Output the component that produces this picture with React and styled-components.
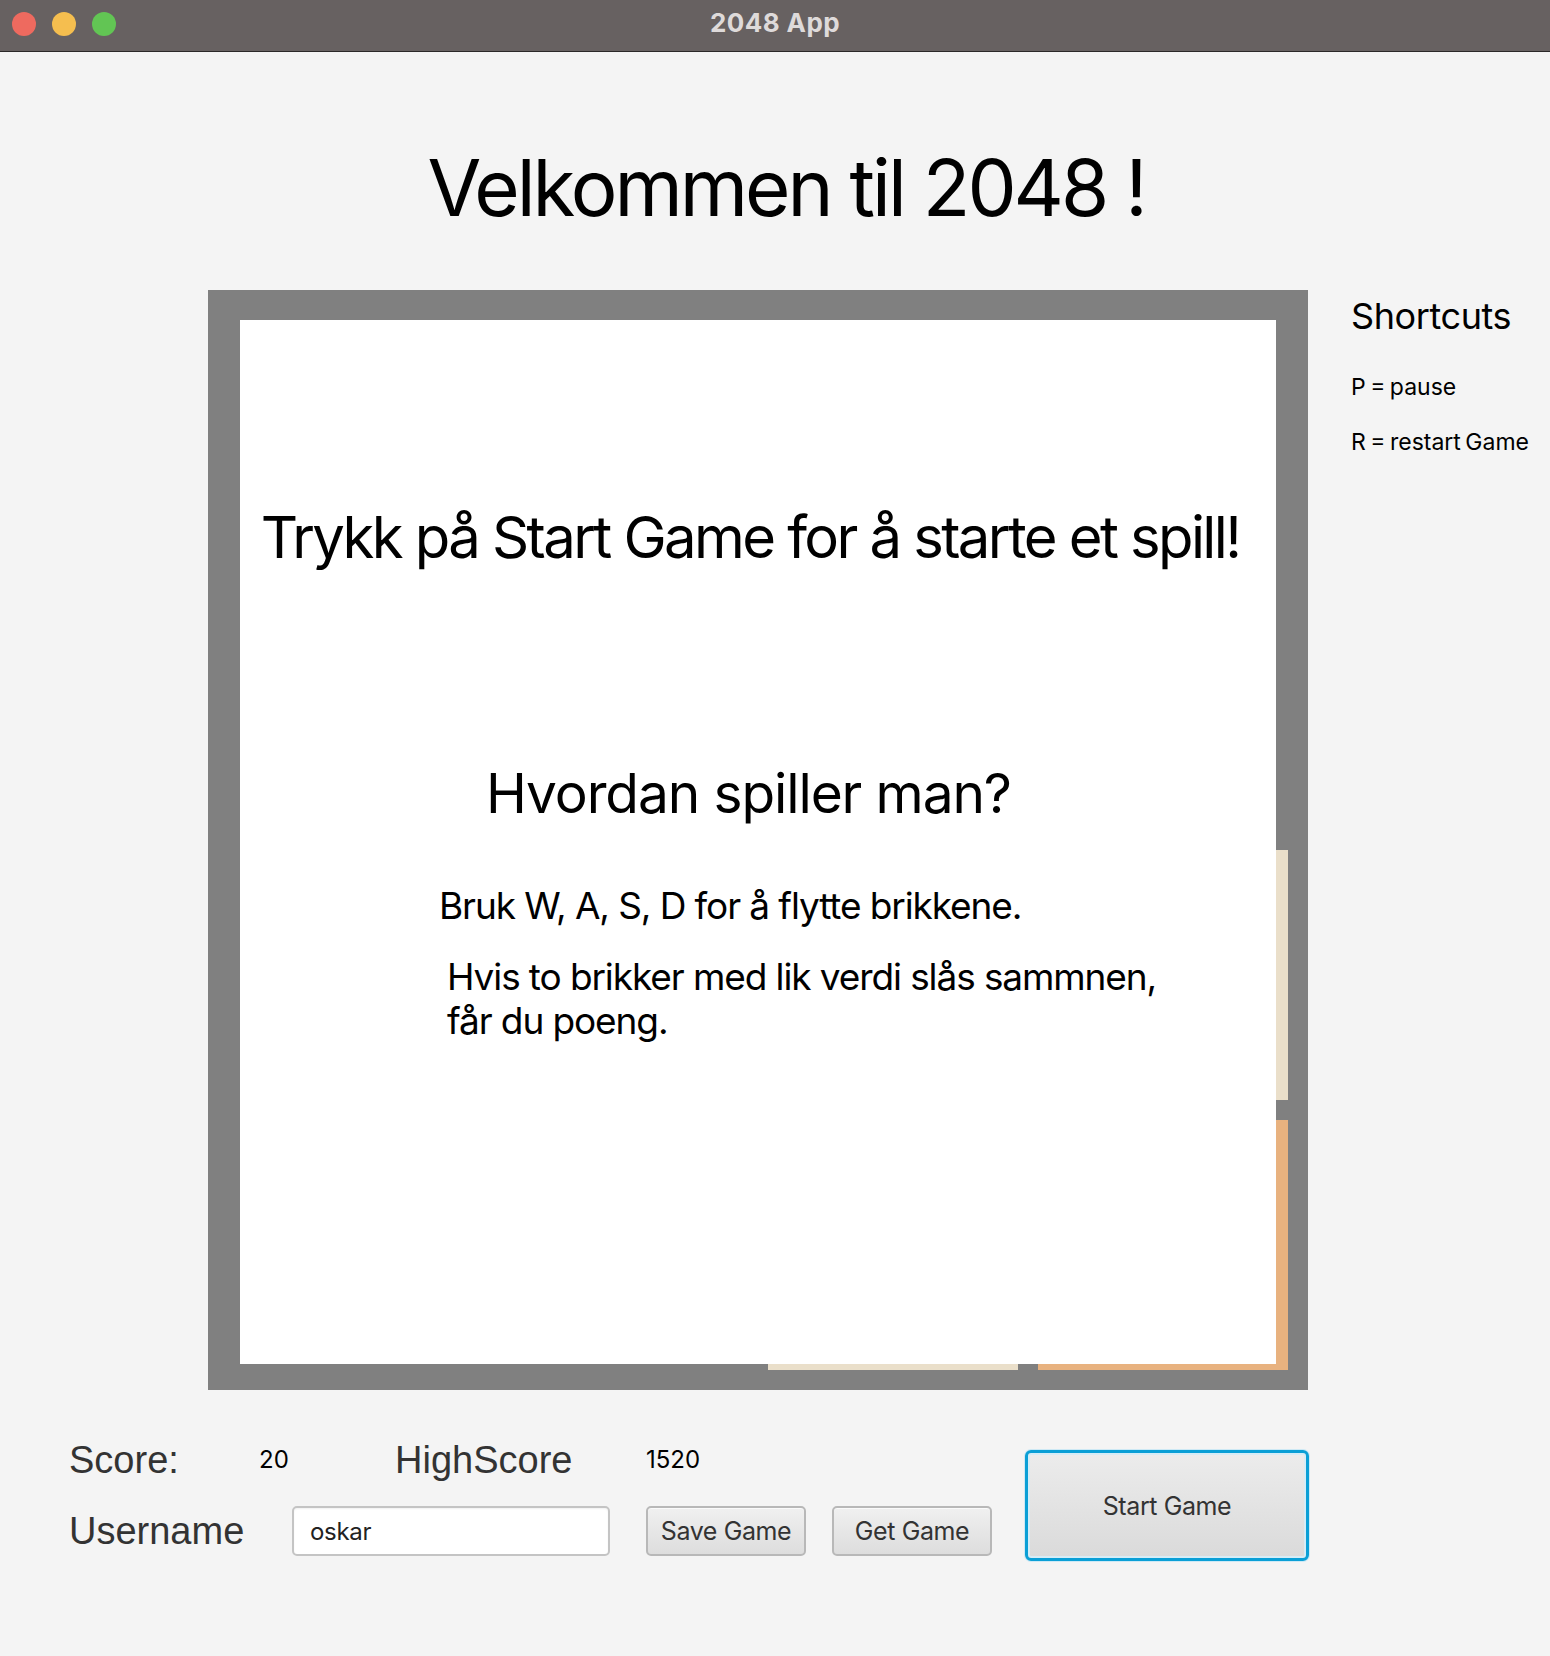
import styled, { createGlobalStyle } from "styled-components";

const GlobalStyle = createGlobalStyle`
    body {
        margin: 0;
        background-color: #f4f4f4;
        font-family: Inter, "Noto Sans", sans-serif;
    }
`

const tiles = [
    [0, 0, 0, 0],
    [0, 0, 0, 0],
    [0, 0, 0, 4],
    [0, 0, 4, 8],
];

const tileColors = {
    0: "#808080",
    4: "#eadfca",
    8: "#e8b27f",
};

const App = () => {
    return (
        <Window>
            <GlobalStyle />
            <TitleBar>
                <Lights>
                    <Light color="#ee6a5f" />
                    <Light color="#f5be4f" />
                    <Light color="#62c554" />
                </Lights>
                <WindowTitle>2048 App</WindowTitle>
            </TitleBar>

            <Main>
                <Heading>Velkommen til 2048 !</Heading>

                <GameRow>
                    <Board>
                        {tiles.flat().map((value, i) => (
                            <Tile key={i} value={value} />
                        ))}
                        <Overlay>
                            <OverlayTitle>Trykk på Start Game for å starte et spill!</OverlayTitle>
                            <OverlaySub>Hvordan spiller man?</OverlaySub>
                            <OverlayText indent={199}>Bruk W, A, S, D for å flytte brikkene.</OverlayText>
                            <OverlayText indent={207} spaced>
                                Hvis to brikker med lik verdi slås sammnen,
                                <br />
                                får du poeng.
                            </OverlayText>
                        </Overlay>
                    </Board>

                    <Shortcuts>
                        <ShortcutsTitle>Shortcuts</ShortcutsTitle>
                        <ShortcutItem>P = pause</ShortcutItem>
                        <ShortcutItem>R = restart Game</ShortcutItem>
                    </Shortcuts>
                </GameRow>

                <Controls>
                    <ControlRows>
                        <ScoreRow>
                            <Label width={190}>Score:</Label>
                            <Value width={136}>20</Value>
                            <Label width={251}>HighScore</Label>
                            <Value>1520</Value>
                        </ScoreRow>
                        <UserRow>
                            <Label width={223}>Username</Label>
                            <NameInput defaultValue="oskar" />
                            <Button>Save Game</Button>
                            <Button>Get Game</Button>
                        </UserRow>
                    </ControlRows>
                    <StartButton>Start Game</StartButton>
                </Controls>
            </Main>
        </Window>
    );
}

const Window = styled.div`
    min-height: 1656px;
    background-color: #f4f4f4;
`

const TitleBar = styled.div`
    height: 52px;
    box-sizing: border-box;
    padding-bottom: 6px;
    background-color: #676161;
    border-bottom: 1px solid #2b2828;
    display: flex;
    align-items: center;
    justify-content: center;
    position: relative;
`

const Lights = styled.div`
    position: absolute;
    left: 12px;
    top: 12px;
    display: flex;
    gap: 16px;
`

const Light = styled.span`
    width: 24px;
    height: 24px;
    border-radius: 50%;
    background-color: ${(props) => props.color};
`

const WindowTitle = styled.div`
    color: #dedada;
    font-family: Inter, sans-serif;
    font-weight: 700;
    font-size: 26px;
    letter-spacing: 0.4px;
`

const Main = styled.div`
    display: flex;
    flex-direction: column;
    padding-top: 97px;
`

const Heading = styled.h1`
    margin: 0 0 63px;
    padding-left: 22px;
    text-align: center;
    font-weight: 400;
    font-size: 78px;
    line-height: 78px;
    letter-spacing: -3px;
    color: #000;
`

const GameRow = styled.div`
    display: flex;
    align-items: flex-start;
    padding-left: 208px;
`

const Board = styled.div`
    position: relative;
    width: 1100px;
    height: 1100px;
    box-sizing: border-box;
    padding: 20px;
    background-color: #808080;
    display: grid;
    grid-template-columns: repeat(4, 250px);
    grid-template-rows: repeat(4, 250px);
    gap: 20px;
`

const Tile = styled.div`
    background-color: ${(props) => tileColors[props.value]};
`

const Overlay = styled.div`
    position: absolute;
    left: 32px;
    top: 30px;
    width: 1036px;
    height: 1044px;
    background-color: #fff;
    display: flex;
    flex-direction: column;
    color: #000;
`

const OverlayTitle = styled.div`
    margin-top: 182px;
    padding-right: 16px;
    text-align: center;
    white-space: nowrap;
    font-size: 58px;
    line-height: 70px;
    letter-spacing: -2.6px;
`

const OverlaySub = styled.div`
    margin-top: 188px;
    padding-left: 246px;
    font-size: 55px;
    line-height: 66px;
    letter-spacing: -1.1px;
`

const OverlayText = styled.div`
    margin-top: ${(props) => (props.spaced ? "27px" : "58px")};
    padding-left: ${(props) => props.indent}px;
    font-size: 37px;
    line-height: 44px;
    letter-spacing: -1.1px;
`

const Shortcuts = styled.div`
    margin-left: 43px;
    display: flex;
    flex-direction: column;
    color: #000;
`

const ShortcutsTitle = styled.div`
    margin-top: 4px;
    font-size: 36px;
    line-height: 44px;
    letter-spacing: -0.4px;
`

const ShortcutItem = styled.div`
    margin-top: 33px;
    font-size: 23px;
    line-height: 32px;
    letter-spacing: 0;
    word-spacing: -2px;
    & + & {
        margin-top: 23px;
    }
`

const Controls = styled.div`
    display: flex;
    align-items: flex-start;
    padding-left: 69px;
    margin-top: 48px;
`

const ControlRows = styled.div`
    display: flex;
    flex-direction: column;
    gap: 24px;
`

const ScoreRow = styled.div`
    display: flex;
    align-items: center;
    height: 44px;
`

const UserRow = styled.div`
    display: flex;
    align-items: center;
    height: 50px;
`

const Label = styled.div`
    width: ${(props) => props.width}px;
    font-family: "Liberation Sans", Arial, sans-serif;
    font-size: 38px;
    line-height: 44px;
    letter-spacing: 0;
    color: #333;
`

const Value = styled.div`
    width: ${(props) => (props.width ? `${props.width}px` : "auto")};
    font-size: 24px;
    line-height: 30px;
    color: #000;
`

const NameInput = styled.input`
    width: 318px;
    height: 50px;
    box-sizing: border-box;
    margin-right: 36px;
    padding: 0 16px;
    border: 2px solid #c4c4c4;
    border-radius: 5px;
    background-color: #fff;
    font-family: Inter, sans-serif;
    font-size: 24px;
    letter-spacing: -0.3px;
    color: #222;
    outline: none;
    box-shadow: inset 0 1px 2px rgba(0, 0, 0, 0.06);
`

const Button = styled.button`
    width: 160px;
    height: 50px;
    margin-right: 26px;
    border: 2px solid #b8b8b8;
    border-radius: 5px;
    background: linear-gradient(#f0f0f0, #dddddd);
    box-shadow: inset 0 1px 0 #fafafa;
    font-family: Inter, sans-serif;
    font-size: 25px;
    letter-spacing: -0.4px;
    color: #333;
    cursor: pointer;
    &:last-child {
        margin-right: 0;
    }
`

const StartButton = styled.button`
    margin-left: 33px;
    margin-top: 12px;
    width: 284px;
    height: 111px;
    border: 3px solid #0a9fd6;
    border-radius: 6px;
    background: linear-gradient(#ececec, #dadada);
    box-shadow: 0 0 0 1px #cde9f5, inset 0 0 0 2px #d6ecf6;
    font-family: Inter, sans-serif;
    font-size: 25px;
    letter-spacing: -0.4px;
    color: #333;
    cursor: pointer;
`

export default App;
